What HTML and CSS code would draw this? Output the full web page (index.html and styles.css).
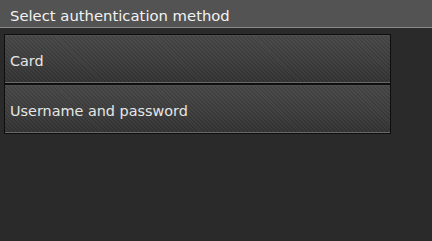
FILE: index.html
```html
<!DOCTYPE html>
<html>
<head>
<meta charset="utf-8">
<link rel="stylesheet" href="styles.css">
</head>
<body>
<div class="screen">
  <div class="header">Select authentication method</div>
  <div class="list">
    <div class="btn">Card</div>
    <div class="btn">Username and password</div>
  </div>
</div>
</body>
</html>
```
FILE: styles.css
```css
html, body {
  margin: 0;
  padding: 0;
  background: #2a2a2a;
}
.screen {
  width: 432px;
  height: 241px;
  background: #2a2a2a;
  font-family: "DejaVu Sans", sans-serif;
  overflow: hidden;
}
.header {
  box-sizing: border-box;
  background: #535353;
  border-bottom: 1px solid #8a8a8a;
  height: 28px;
  color: #f2f2f2;
  font-size: 14.8px;
  line-height: 16px;
  padding: 8px 0 0 10px;
}
.list {
  padding: 6px 0 0 4px;
  display: flex;
  flex-direction: column;
}
.btn {
  width: 387px;
  height: 50px;
  box-sizing: border-box;
  border: 1px solid #0e0e0e;
  background:
    repeating-linear-gradient(45deg, rgba(255,255,255,0.03) 0 1.4px, rgba(0,0,0,0.05) 1.4px 2.8px),
    linear-gradient(#474747, #3c3d3c 55%, #323232);
  box-shadow: inset 0 -1px 0 #686868, inset 0 1px 0 #4e4e4e;
  color: #e6e6e6;
  font-size: 14.4px;
  display: flex;
  align-items: center;
  padding: 3px 0 0 5px;
}
```
